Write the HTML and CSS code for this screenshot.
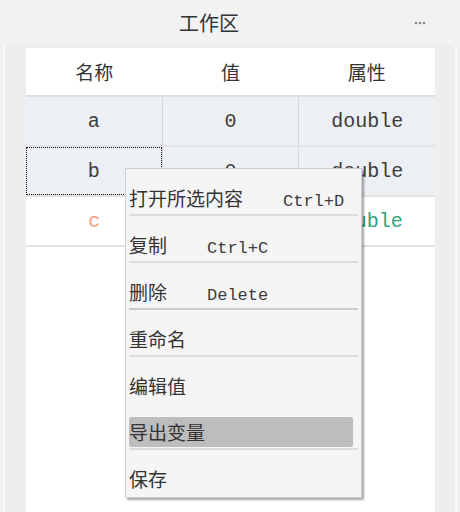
FILE: index.html
```html
<!DOCTYPE html>
<html lang="zh">
<head>
    <meta charset="UTF-8">
    <title>工作区</title>
    <link rel="stylesheet" href="styles.css">
</head>
<body>
<div class="header">
    <div class="title">工作区</div>
    <div class="more">
        <svg width="12" height="4" viewBox="0 0 12 4">
            <circle cx="2" cy="2" r="1.3" fill="#8a8a8a"/>
            <circle cx="6" cy="2" r="1.3" fill="#8a8a8a"/>
            <circle cx="10" cy="2" r="1.3" fill="#8a8a8a"/>
        </svg>
    </div>
</div>
<div class="panel">
    <div class="sheet">
        <div class="row head">
            <div class="cell">名称</div>
            <div class="cell">值</div>
            <div class="cell">属性</div>
        </div>
        <div class="row shaded">
            <div class="cell mono">a</div>
            <div class="cell mono">0</div>
            <div class="cell mono">double</div>
        </div>
        <div class="row shaded">
            <div class="cell mono focused">b</div>
            <div class="cell mono">0</div>
            <div class="cell mono">double</div>
        </div>
        <div class="row">
            <div class="cell mono name-c">c</div>
            <div class="cell mono">0</div>
            <div class="cell mono type-c">double</div>
        </div>
    </div>
</div>

<div class="menu">
    <div class="item"><div class="label">打开所选内容<span class="key">Ctrl+D</span></div></div>
    <div class="sep"></div>
    <div class="item"><div class="label">复制<span class="key">Ctrl+C</span></div></div>
    <div class="sep"></div>
    <div class="item"><div class="label">删除<span class="key">Delete</span></div></div>
    <div class="sep dark"></div>
    <div class="item"><div class="label">重命名</div></div>
    <div class="sep"></div>
    <div class="item"><div class="label">编辑值</div></div>
    <div class="item export"><div class="label active">导出变量</div></div>
    <div class="sep"></div>
    <div class="item"><div class="label">保存</div></div>
</div>
</body>
</html>
```

FILE: styles.css
```css
body {
    margin: 0;
    width: 460px;
    height: 512px;
    overflow: hidden;
    background: #f0f0f0;
    font-family: "Noto Sans CJK SC", "Noto Sans", sans-serif;
    color: #333;
    display: flex;
    flex-direction: column;
}
.header {
    height: 45px;
    background: #f2f2f2;
    display: flex;
    align-items: center;
}
.header .title {
    flex: 1;
    text-align: center;
    font-size: 20px;
    padding-left: 4px;
}
.header .more {
    width: 46px;
    display: flex;
    align-items: center;
}
.panel {
    flex: 1;
    margin: 0 3px;
    border-left: 2px solid #fafafa;
    border-right: 2px solid #fafafa;
    background: #eeeeee;
    padding: 3px 20px 0 21px;
    display: flex;
}
.sheet {
    flex: 1;
    background: #fff;
}
.row {
    display: flex;
    height: 48px;
    border-bottom: 2px solid #e3e3e3;
}
.row.head {
    height: 47px;
    border-bottom-color: #dedede;
}
.row.shaded {
    background: #eceff4;
}
.cell {
    flex: 1;
    display: flex;
    align-items: center;
    justify-content: center;
    font-size: 19px;
}
.row.shaded .cell + .cell {
    border-left: 1px solid #d6d6d6;
}
.mono {
    font-family: "Liberation Mono", monospace;
    font-size: 20px;
    color: #3c3c3c;
}
.focused {
    outline: 1px dotted #111;
    outline-offset: -1px;
}
.mono.name-c {
    color: #f4a07c;
}
.mono.type-c {
    color: #2ea47a;
}
.menu {
    position: absolute;
    left: 125px;
    top: 168px;
    width: 235px;
    background: #f5f5f5;
    border: 1px solid #cfcfcf;
    box-shadow: 2px 2px 2px rgba(0, 0, 0, 0.35);
    padding-bottom: 2px;
    font-size: 19px;
}
.item {
    padding: 14px 8px 1px 3px;
}
.item.export {
    padding-top: 15px;
}
.label {
    height: 22px;
    line-height: 22px;
    padding: 4px 0;
    border-radius: 2px;
    white-space: nowrap;
}
.label.active {
    background: #bdbdbd;
}
.key {
    font-family: "Liberation Mono", monospace;
    font-size: 17px;
    line-height: 1;
    margin-left: 40px;
    color: #3c3c3c;
}
.sep {
    height: 2px;
    margin: 0 3px;
    background: #dcdcdc;
}
.sep.dark {
    background: #cbcbcb;
}
```
